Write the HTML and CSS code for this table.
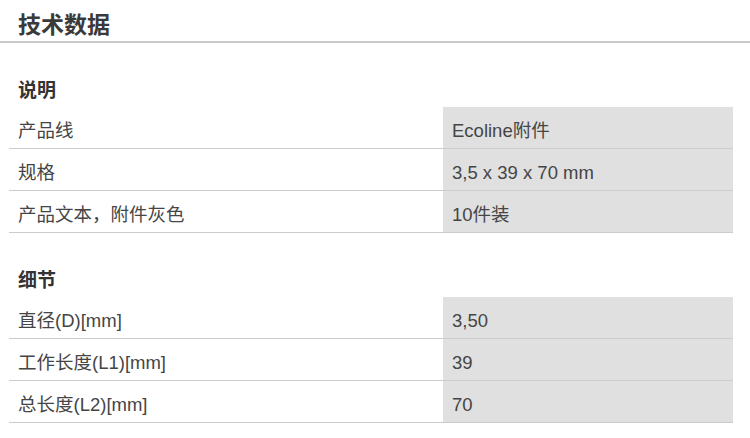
FILE: index.html
```html
<!DOCTYPE html>
<html lang="zh-CN">
<head>
<meta charset="utf-8">
<title>技术数据</title>
<link rel="stylesheet" href="styles.css">
</head>
<body>
  <h1 class="page-title">技术数据</h1>

  <section class="section">
    <h2 class="section-title">说明</h2>
    <table class="spec-table">
      <tr><td class="label">产品线</td><td class="value">Ecoline附件</td></tr>
      <tr><td class="label">规格</td><td class="value">3,5 x 39 x 70 mm</td></tr>
      <tr><td class="label">产品文本，附件灰色</td><td class="value">10件装</td></tr>
    </table>
  </section>

  <section class="section">
    <h2 class="section-title">细节</h2>
    <table class="spec-table">
      <tr><td class="label">直径(D)[mm]</td><td class="value">3,50</td></tr>
      <tr><td class="label">工作长度(L1)[mm]</td><td class="value">39</td></tr>
      <tr><td class="label">总长度(L2)[mm]</td><td class="value">70</td></tr>
    </table>
  </section>
</body>
</html>
```

FILE: styles.css
```css
html, body {
  margin: 0;
  padding: 0;
  background: #ffffff;
}

body {
  font-family: "Liberation Sans", Arial, "Noto Sans CJK SC", sans-serif;
  color: #454545;
  width: 750px;
}

.page-title {
  margin: 0;
  padding: 11px 18px 1px;
  font-size: 23px;
  line-height: 29px;
  font-weight: bold;
  color: #3a3a3a;
  border-bottom: 2px solid #c9c9c9;
}

.section {
  margin: 36px 0 0 9px;
  width: 724px;
}

.section-title {
  margin: 0 0 4px;
  padding-left: 9px;
  font-size: 19px;
  line-height: 24px;
  font-weight: bold;
  color: #333333;
}

.spec-table {
  width: 724px;
  border-collapse: collapse;
  table-layout: fixed;
}

.spec-table td {
  padding: 14px 9px 7px;
  font-size: 18.5px;
  line-height: 20px;
  border-bottom: 1px solid #cccccc;
  vertical-align: top;
  white-space: nowrap;
}

.spec-table .label {
  width: 416px;
}

.spec-table .value {
  background: #e0e0e0;
}
```
